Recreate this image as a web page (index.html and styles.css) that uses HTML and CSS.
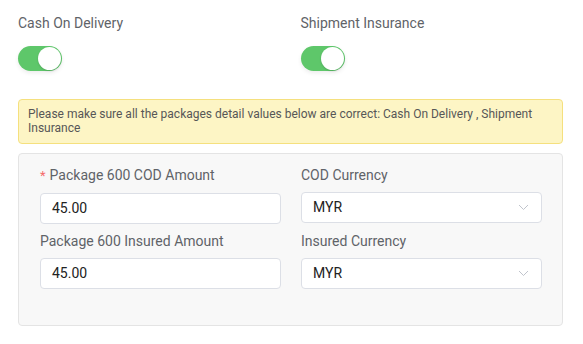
FILE: index.html
```html
<!DOCTYPE html>
<html>
<head>
<meta charset="utf-8">
<link rel="stylesheet" href="styles.css">
</head>
<body>
<div class="page">
  <div class="toggles">
    <div class="toggle-item">
      <div class="toggle-label">Cash On Delivery</div>
      <div class="switch"><span class="knob"></span></div>
    </div>
    <div class="toggle-item">
      <div class="toggle-label">Shipment Insurance</div>
      <div class="switch"><span class="knob"></span></div>
    </div>
  </div>
  <div class="alert">Please make sure all the packages detail values below are correct: Cash On Delivery , Shipment Insurance</div>
  <div class="panel">
    <div class="grid">
      <div class="field">
        <div class="label"><span class="req">*</span>Package 600 COD Amount</div>
        <div class="input">45.00</div>
      </div>
      <div class="field">
        <div class="label">COD Currency</div>
        <div class="input select">MYR
          <svg class="chev" width="11" height="7" viewBox="0 0 11 7"><path d="M1 1 L5.5 5.5 L10 1" fill="none" stroke="#c0c4cc" stroke-width="1"/></svg>
        </div>
      </div>
      <div class="field">
        <div class="label">Package 600 Insured Amount</div>
        <div class="input">45.00</div>
      </div>
      <div class="field">
        <div class="label">Insured Currency</div>
        <div class="input select">MYR
          <svg class="chev" width="11" height="7" viewBox="0 0 11 7"><path d="M1 1 L5.5 5.5 L10 1" fill="none" stroke="#c0c4cc" stroke-width="1"/></svg>
        </div>
      </div>
    </div>
  </div>
</div>
</body>
</html>
```
FILE: styles.css
```css
html, body {
  margin: 0;
  padding: 0;
  background: #ffffff;
  font-family: Roboto, "Liberation Sans", Arial, sans-serif;
}
.page {
  padding: 12px 20px 0 18px;
}
.toggles {
  display: grid;
  grid-template-columns: 1fr 1fr;
  column-gap: 20px;
}
.toggle-label {
  font-size: 14px;
  line-height: 22px;
  color: #5f6368;
}
.switch {
  margin-top: 12px;
  width: 44px;
  height: 25px;
  border-radius: 13px;
  background: #5ec76a;
  position: relative;
  box-shadow: 0 2px 4px rgba(0, 0, 0, 0.08);
}
.knob {
  position: absolute;
  top: 1px;
  right: 1px;
  width: 23px;
  height: 23px;
  border-radius: 50%;
  background: #ffffff;
  box-shadow: 0 1px 2px rgba(0, 0, 0, 0.15);
}
.alert {
  margin-top: 28px;
  background: #fdf5c5;
  border: 1px solid #f5e07e;
  border-radius: 4px;
  padding: 7px 9px 8px 9px;
  font-size: 12px;
  line-height: 14px;
  color: #575757;
}
.panel {
  margin-top: 9px;
  background: #f8f8f8;
  border: 1px solid #e4e4e4;
  border-radius: 4px;
  padding: 10px 20px 36px 21px;
}
.grid {
  display: grid;
  grid-template-columns: 1fr 1fr;
  column-gap: 20px;
  row-gap: 6px;
}
.label {
  font-size: 14px;
  line-height: 22px;
  color: #5f6368;
  margin-bottom: 6px;
}
.req {
  color: #f56c6c;
  margin-right: 4px;
  font-size: 13px;
}
.input {
  height: 31px;
  box-sizing: border-box;
  background: #ffffff;
  border: 1px solid #dcdfe6;
  border-radius: 4px;
  padding: 0 11px;
  font-size: 14px;
  line-height: 29px;
  color: #222222;
  display: flex;
  align-items: center;
  justify-content: space-between;
}
.chev {
  margin-right: 1px;
}
```
